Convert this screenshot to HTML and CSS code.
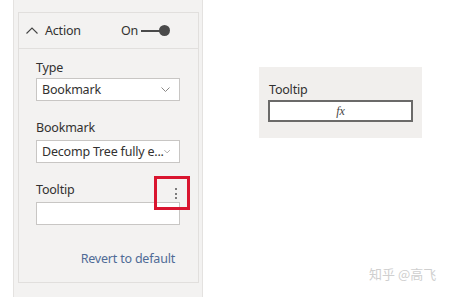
FILE: index.html
```html
<!DOCTYPE html>
<html lang="en">
<head>
    <meta charset="UTF-8">
    <meta name="viewport" content="width=device-width, initial-scale=1.0">
    <title>Action tooltip</title>
    <link rel="stylesheet" href="styles.css">
</head>
<body>
    <div class="page">
        <div class="pane">
            <div class="card">
                <div class="card-head">
                    <svg class="chevron-up" width="12" height="7" viewBox="0 0 12 7">
                        <polyline points="0.5,6.5 6,1 11.5,6.5" fill="none" stroke="#444" stroke-width="1.1"/>
                    </svg>
                    <span class="head-title">Action</span>
                    <span class="toggle-label">On</span>
                    <span class="toggle"><span class="toggle-track"></span><span class="toggle-knob"></span></span>
                </div>
                <div class="card-body">
                    <div class="field">
                        <div class="field-label">Type</div>
                        <div class="select">
                            <span class="select-text">Bookmark</span>
                            <svg class="chevron-down" width="9" height="5" viewBox="0 0 9 5">
                                <polyline points="0.5,0.5 4.5,4.5 8.5,0.5" fill="none" stroke="#8a8886" stroke-width="1"/>
                            </svg>
                        </div>
                    </div>
                    <div class="field">
                        <div class="field-label">Bookmark</div>
                        <div class="select">
                            <span class="select-text">Decomp Tree fully e...</span>
                            <svg class="chevron-down" width="9" height="5" viewBox="0 0 9 5">
                                <polyline points="0.5,0.5 4.5,4.5 8.5,0.5" fill="none" stroke="#8a8886" stroke-width="1"/>
                            </svg>
                        </div>
                    </div>
                    <div class="field">
                        <div class="field-row">
                            <span class="field-label">Tooltip</span>
                            <span class="more">
                                <span class="dot"></span><span class="dot"></span><span class="dot"></span>
                            </span>
                        </div>
                        <div class="text-input"></div>
                    </div>
                    <div class="revert">Revert to default</div>
                </div>
            </div>
        </div>

        <div class="zoomed">
            <div class="field-label">Tooltip</div>
            <div class="fx-box"><span class="fx">fx</span></div>
        </div>
    </div>

    <div class="watermark">知乎 @高飞</div>
</body>
</html>
```

FILE: styles.css
```css
body {
    margin: 0;
    background-color: #ffffff;
    font-family: "Noto Sans", "Open Sans", sans-serif;
    color: #323130;
    font-size: 12px;
    letter-spacing: -0.2px;
}
.page {
    display: flex;
    align-items: flex-start;
}
.pane {
    width: 190px;
    height: 297px;
    margin-left: 13px;
    padding-top: 12px;
    background-color: #f3f2f1;
    border-left: 1px solid #e4e2e0;
    border-right: 1px solid #e4e2e0;
    box-sizing: border-box;
}
.card {
    margin: 0 3px 0 4px;
    height: 271px;
    border: 1px solid #e1dfdd;
    box-sizing: border-box;
}
.card-head {
    display: flex;
    align-items: center;
    height: 35px;
    border-bottom: 1px solid #e1dfdd;
    padding-left: 7px;
}
.chevron-up {
    margin-right: 7px;
}
.head-title {
    font-size: 12.5px;
    width: 76px;
}
.toggle-label {
    font-size: 12.5px;
    margin-right: 3px;
}
.toggle {
    position: relative;
    width: 30px;
    height: 12px;
}
.toggle-track {
    position: absolute;
    left: 0;
    top: 5px;
    width: 22px;
    height: 2px;
    background-color: #4a4a4a;
}
.toggle-knob {
    position: absolute;
    left: 18px;
    top: 0;
    width: 11px;
    height: 11px;
    border-radius: 50%;
    background-color: #4a4a4a;
}
.card-body {
    padding: 11px 18px 0 17px;
}
.field {
    margin-bottom: 19px;
}
.field-label {
    font-size: 12.5px;
    line-height: 16px;
    margin-bottom: 2px;
}
.field-row {
    position: relative;
    margin-bottom: 4px;
}
.field-row .field-label {
    display: block;
    margin-bottom: 0;
}
.select {
    display: flex;
    align-items: center;
    justify-content: space-between;
    height: 23px;
    padding: 0 9px 0 5px;
    background-color: #ffffff;
    border: 1px solid #c8c6c4;
    box-sizing: border-box;
    white-space: nowrap;
}
.select-text {
    font-size: 12.5px;
}
.field + .field .field-label {
    margin-bottom: 4px;
}
.more {
    position: absolute;
    right: -10px;
    top: -6px;
    display: flex;
    flex-direction: column;
    align-items: center;
    gap: 2.5px;
    width: 36px;
    height: 34px;
    padding-top: 9px;
    padding-left: 7px;
    border: 3px solid #d9152f;
    box-sizing: border-box;
    z-index: 1;
}
.dot {
    width: 2px;
    height: 2px;
    border-radius: 1px;
    background-color: #555;
}
.text-input {
    height: 23px;
    background-color: #ffffff;
    border: 1px solid #c8c6c4;
    box-sizing: border-box;
}
.revert {
    text-align: right;
    font-size: 12.5px;
    color: #4f6b96;
    margin-top: 25px;
    padding-right: 5px;
}
.zoomed {
    margin-left: 56px;
    margin-top: 67px;
    width: 163px;
    height: 71px;
    padding: 15px 9px 0 9px;
    background-color: #f1efed;
    box-sizing: border-box;
}
.zoomed .field-label {
    margin-bottom: 2px;
    padding-left: 1px;
}
.fx-box {
    height: 22px;
    border: 2px solid #6b6a69;
    background-color: #ffffff;
    display: flex;
    align-items: center;
    justify-content: center;
    box-sizing: border-box;
}
.fx {
    font-family: "Liberation Serif", serif;
    font-style: italic;
    font-size: 12px;
    color: #444;
}
.watermark {
    position: absolute;
    left: 369px;
    top: 264px;
    font-family: "Noto Sans CJK SC", sans-serif;
    font-size: 13px;
    letter-spacing: 0;
    color: #cfcfcf;
}
```
